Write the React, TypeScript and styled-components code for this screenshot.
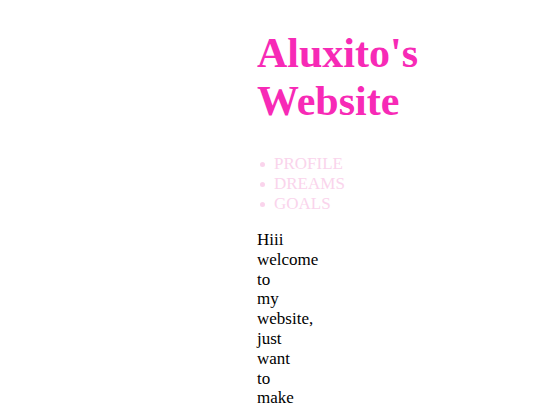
import React from 'react';
import styled, { createGlobalStyle } from 'styled-components';

const GlobalStyle = createGlobalStyle`
  html, body {
    margin: 0;
    padding: 0;
    background: #ffffff;
  }
  body {
    font-family: "Liberation Serif", "Times New Roman", serif;
    color: #000000;
  }
`;

const Page = styled.main`
  padding: 29px 0 0 257px;
`;

const Title = styled.h1`
  width: min-content;
  margin: 0;
  font-size: 42px;
  font-weight: bold;
  color: #f72ab6;
  line-height: normal;
`;

const Menu = styled.ul`
  list-style: none;
  margin: 29px 0 0 0;
  padding: 0;
  font-size: 17px;
  color: #fad4ec;
`;

const MenuItem = styled.li`
  display: flex;
  align-items: center;
  gap: 9px;
  line-height: 20px;

  &::before {
    content: '';
    width: 5px;
    height: 5px;
    margin-left: 3px;
    border-radius: 50%;
    background: #fad4ec;
    flex-shrink: 0;
  }
`;

const Intro = styled.p`
  width: 1px;
  margin: 16px 0 0 0;
  font-size: 17px;
  line-height: 19.8px;
`;

const links = ['PROFILE', 'DREAMS', 'GOALS'];

const App = () => {
  return (
    <>
      <GlobalStyle />
      <Page>
        <Title>Aluxito's Website</Title>
        <Menu>
          {links.map((link) => (
            <MenuItem key={link}>{link}</MenuItem>
          ))}
        </Menu>
        <Intro>
          Hiii welcome to my website, just want to make this a little
          special place
        </Intro>
      </Page>
    </>
  );
};

export default App;
